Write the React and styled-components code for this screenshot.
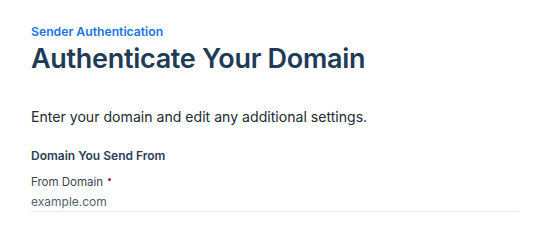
import React from "react";
import styled, { createGlobalStyle } from "styled-components";

const GlobalStyle = createGlobalStyle`
  html, body {
    margin: 0;
    padding: 0;
    background: #ffffff;
  }
  body {
    font-family: Inter, "Noto Sans", sans-serif;
    -webkit-font-smoothing: antialiased;
  }
`;

const Page = styled.div`
  padding: 24px 31px 0 31px;
  width: 557px;
  box-sizing: border-box;
`;

const Eyebrow = styled.div`
  font-size: 12.2px;
  font-weight: 600;
  color: #1a73e8;
  line-height: 16px;
`;

const Title = styled.h1`
  margin: 2px 0 0;
  font-size: 27px;
  font-weight: 600;
  letter-spacing: -0.3px;
  color: #213a56;
  line-height: 34px;
`;

const Intro = styled.p`
  margin: 31px 0 0;
  font-size: 14.1px;
  color: #222a33;
  line-height: 20px;
`;

const Section = styled.section`
  margin-top: 21px;
  width: 487px;
`;

const SectionTitle = styled.h2`
  margin: 0;
  font-size: 12px;
  font-weight: 600;
  color: #2a3e55;
  line-height: 16px;
`;

const Field = styled.div`
  margin-top: 10px;
  display: flex;
  flex-direction: column;
`;

const Label = styled.label`
  font-size: 11.5px;
  color: #3a4550;
  line-height: 16px;
`;

const Required = styled.span`
  display: inline-block;
  width: 3px;
  height: 3px;
  border-radius: 50%;
  background: #c8102e;
  margin-left: 5px;
  vertical-align: 5px;
`;

const Input = styled.input`
  border: none;
  border-bottom: 1px solid #e6e8ea;
  outline: none;
  padding: 3px 0 2px;
  margin: 0;
  font-family: inherit;
  font-size: 12px;
  line-height: 16px;
  height: 22px;
  box-sizing: border-box;
  color: #4a5560;
  background: transparent;
  &::placeholder {
    color: #56616c;
  }
`;

export default function App() {
  return (
    <>
      <GlobalStyle />
      <Page>
        <Eyebrow>Sender Authentication</Eyebrow>
        <Title>Authenticate Your Domain</Title>
        <Intro>Enter your domain and edit any additional settings.</Intro>
        <Section>
          <SectionTitle>Domain You Send From</SectionTitle>
          <Field>
            <Label>
              From Domain<Required aria-label="required" />
            </Label>
            <Input placeholder="example.com" />
          </Field>
        </Section>
      </Page>
    </>
  );
}
